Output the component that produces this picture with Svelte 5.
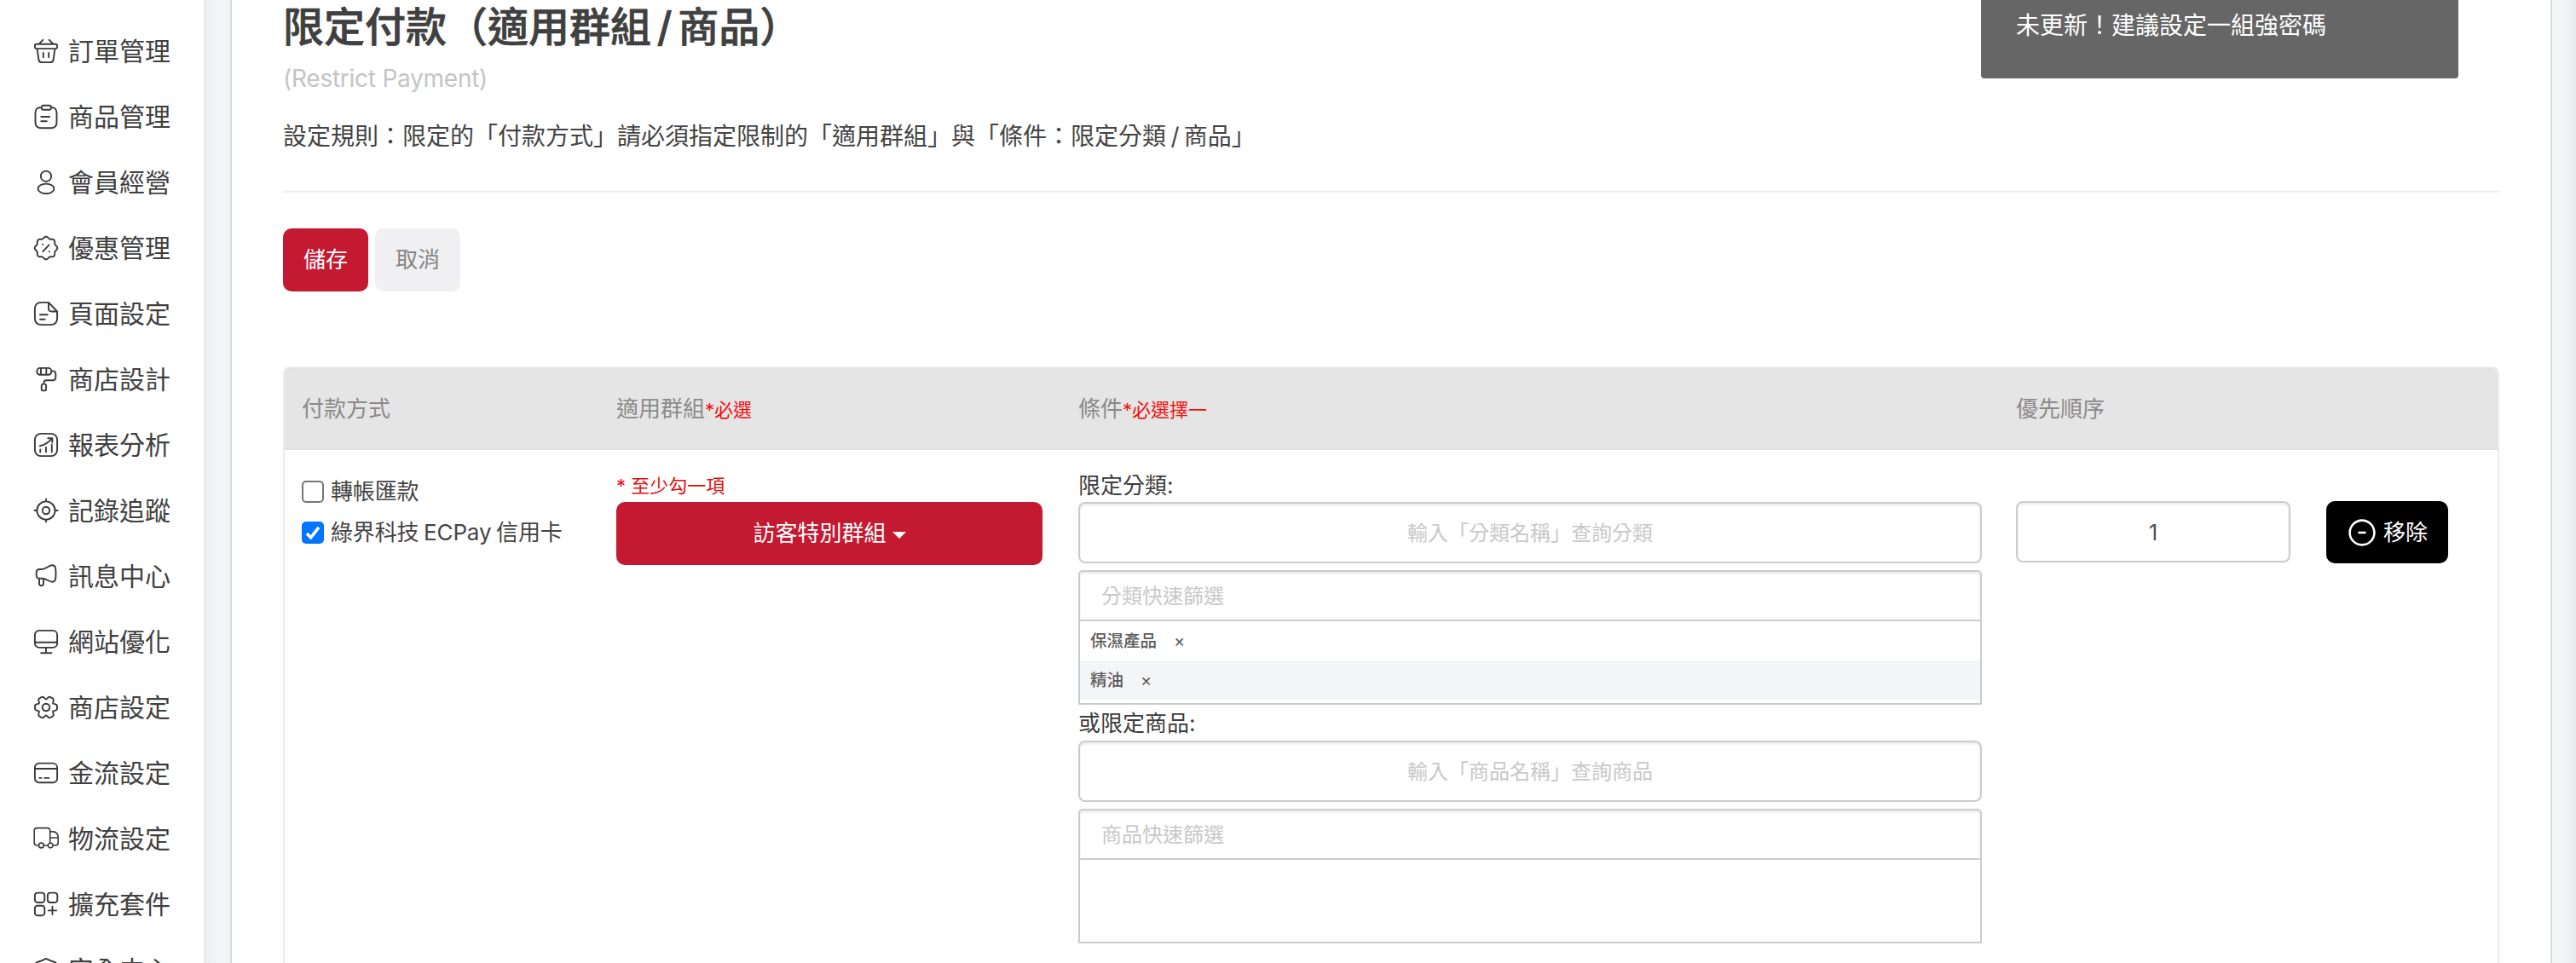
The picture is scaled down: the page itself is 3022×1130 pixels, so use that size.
<script>
  // Closed wavy outline around (14,14), used by the badge and gear icons.
  // `flat` widens the tips of the lobes.
  function lobes(count, base, amp, flat = 0) {
    let d = '';
    for (let i = 0; i < 120; i++) {
      const a = (i / 120) * Math.PI * 2;
      const r = base + amp * Math.cos(count * a) - flat * Math.cos(2 * count * a);
      d += (i ? 'L' : 'M') + (14 + r * Math.cos(a)).toFixed(2) + ' ' + (14 + r * Math.sin(a)).toFixed(2);
    }
    return d + 'Z';
  }

  const rr = (x, y, w, h, r) =>
    `M${x + r} ${y}h${w - 2 * r}a${r} ${r} 0 0 1 ${r} ${r}v${h - 2 * r}a${r} ${r} 0 0 1 ${-r} ${r}h${-(w - 2 * r)}a${r} ${r} 0 0 1 ${-r} ${-r}v${-(h - 2 * r)}a${r} ${r} 0 0 1 ${r} ${-r}Z`;
  const circle = (x, y, rx, ry = rx) =>
    `M${x - rx} ${y}a${rx} ${ry} 0 1 0 ${2 * rx} 0a${rx} ${ry} 0 1 0 ${-2 * rx} 0Z`;

  const menu = [
    { label: '訂單管理', d: rr(0.9, 5.7, 26.2, 5.4, 1.8) + 'M3.6 11.4L5.4 24Q5.9 27.1 8.8 27.1H19.2Q22.1 27.1 22.6 24L24.4 11.4M10.3 .8L5.7 5.6M17.7 .8L22.3 5.6M10.8 16V21.2M17.2 16V21.2' },
    { label: '商品管理', d: 'M8.8 3H8.3Q1.5 3 1.5 9.8V20.5Q1.5 27.2 8.3 27.2H19.7Q26.5 27.2 26.5 20.5V9.8Q26.5 3 19.7 3' + rr(8.8, 0.7, 11, 5, 1.8) + 'M8.3 14H18.2M8.3 19.3H14.8' },
    { label: '會員經營', d: circle(14, 6.8, 6.2) + circle(14, 21.4, 9.4, 5.8) },
    { label: '優惠管理', d: lobes(8, 12.3, 1) + 'M10.3 18.2L17.6 10.4M10 9.8h.2M17.7 18.3h.2' },
    { label: '頁面設定', d: 'M17 .9H8.5Q.9 .9 .9 8.5V19.5Q.9 27.1 8.5 27.1H19.5Q27.1 27.1 27.1 19.5V11.5ZM17 .9V8Q17 11.5 20.5 11.5H27.1M7 15.2H15.7M7 20.7H12.7' },
    { label: '商店設計', d: rr(3.4, 0.9, 16.8, 7.8, 3.4) + 'M8 1V8.6M14.3 1V8.6M20.2 4.4H22Q25.3 4.4 25.3 8V12Q25.3 15.2 22 15.2H14.5Q11.4 15.2 11.4 18.5V19.6' + rr(8.7, 19.6, 5.4, 7.8, 2) },
    { label: '報表分析', d: rr(0.9, 0.9, 26.2, 26.2, 7) + 'M7.2 19.5V22.5M14 17V22.5M20.8 13.5V22.5M6.8 15.2Q15 13.6 21.3 6.4M16.3 6.2H21.4V11' },
    { label: '記錄追蹤', d: circle(14, 14, 10.6) + circle(14, 14, 4.2) + 'M14 .4V3.4M14 24.6V27.6M.4 14H3.4M24.6 14H27.6' },
    { label: '訊息中心', d: 'M6.5 6H9C14 6 17 1.3 21.3 1.3C25 1.3 25.5 4 25.5 11C25.5 18 25 20.7 21.3 20.7C17 20.7 15 16.8 9 16.8H6.5Q2.7 16.8 2.7 13V9.8Q2.7 6 6.5 6ZM6 17V22.7a2.5 2.5 0 0 0 5 0V17.3' },
    { label: '網站優化', d: rr(0.9, 0.9, 26.2, 20, 5) + 'M1 14.7H27M14 21V27M8.2 27.2H20.4' },
    { label: '商店設定', d: lobes(6, 11.8, 1.8, 0.6) + circle(14, 14, 4.3) },
    { label: '金流設定', d: rr(0.9, 2.6, 26.2, 22.6, 5) + 'M1 9H27M6.3 19.9H8.6M12.2 19.9H17.4' },
    { label: '物流設定', thin: true, d: 'M5.3 22H3.4Q.2 22 .2 18.8V4.6Q.2 1.6 3.4 1.6H15.6Q18.7 1.6 18.7 4.6V19M18.7 5.9H22Q28.2 6.2 28.2 13V18.8Q28.2 22 25 22H22.2M18.7 13H28M11.4 22H16.2' + circle(8.4, 22, 2.9) + circle(19.2, 22, 2.9) },
    { label: '擴充套件', d: rr(0.9, 0.6, 11.4, 11.4, 3) + rr(15.9, 0.6, 11.4, 11.4, 3) + rr(0.9, 15.8, 11.4, 11.4, 3) + 'M21.5 16.8V26M16.9 21.4H26.1' },
    { label: '安全中心', d: 'M14 .9Q9 3.6 3.7 5Q1.9 5.5 1.9 7.5C1.9 17 5 24 14 27.1C23 24 26.1 17 26.1 7.5Q26.1 5.5 24.3 5Q19 3.6 14 .9Z' }
  ];

  const groups = [
    { title: '限定分類:', search: '輸入「分類名稱」查詢分類', filter: '分類快速篩選', items: ['保濕產品', '精油'] },
    { title: '或限定商品:', search: '輸入「商品名稱」查詢商品', filter: '商品快速篩選', items: [] }
  ];
</script>

<div class="app">
  <nav class="side">
    {#each menu as m}
      <a class="item">
        <svg class="ico" class:thin={m.thin} viewBox="0 0 28 28"><path d={m.d} /></svg>
        <span>{m.label}</span>
      </a>
    {/each}
  </nav>
  <div class="gutter left"></div>
  <main>
    <h1>限定付款（適用群組 / 商品）</h1>
    <p class="sub">(Restrict Payment)</p>
    <p class="desc">設定規則：限定的「付款方式」請必須指定限制的「適用群組」與「條件：限定分類 / 商品」</p>
    <div class="actions">
      <button class="btn red">儲存</button>
      <button class="btn gray">取消</button>
    </div>
    <section class="table">
      <div class="row head">
        <div>付款方式</div>
        <div>適用群組<small>*必選</small></div>
        <div>條件<small>*必選擇一</small></div>
        <div>優先順序</div>
      </div>
      <div class="row body">
        <div class="pay">
          <label><i class="check"></i>轉帳匯款</label>
          <label>
            <i class="check on"><svg viewBox="0 0 26 26"><path d="M6 14L10.6 18.8L20 6.8" /></svg></i>綠界科技 ECPay 信用卡
          </label>
        </div>
        <div class="group">
          <p class="warn">* 至少勾一項</p>
          <button class="btn red wide">訪客特別群組<i class="caret"></i></button>
        </div>
        <div class="cond">
          {#each groups as g}
            <p class="ctitle">{g.title}</p>
            <div class="search">{g.search}</div>
            <div class="filter">{g.filter}</div>
            <div class="list">
              {#each g.items as it}
                <div class="li"><span>{it}</span><b>×</b></div>
              {/each}
            </div>
          {/each}
        </div>
        <div class="prio"><div class="num">1</div></div>
        <div class="prio">
          <button class="btn remove">
            <svg viewBox="0 0 32 32"><circle cx="16" cy="16" r="14.4" /><path d="M11.5 16H20.5" /></svg>移除
          </button>
        </div>
      </div>
    </section>
    <aside class="toast">未更新！建議設定一組強密碼</aside>
  </main>
  <div class="gutter right"></div>
</div>

<style>
  :global(body) { background: #fff; overflow: hidden; }
  .app {
    display: grid;
    grid-template-columns: 239px 31px 2724px 28px;
    width: 3022px; height: 1130px; overflow: hidden;
    font-family: Inter, "Noto Sans CJK TC", sans-serif;
    font-size: 26px; color: #444;
  }
  .app * { box-sizing: border-box; }
  p, h1 { margin: 0; white-space: nowrap; }
  .side { padding-top: 21px; height: 1130px; overflow: hidden; }
  .item { display: flex; align-items: center; height: 77px; padding-left: 40px; gap: 12px; font-size: 30px; line-height: 44px; color: #404040; }
  .item span { white-space: nowrap; }
  .ico { width: 28px; height: 28px; overflow: visible; flex: none; }
  .ico path { fill: none; stroke: #3a3a3a; stroke-width: 1.9; stroke-linecap: round; stroke-linejoin: round; }
  .ico.thin path { stroke-width: 1.6; }
  .gutter.left { background: linear-gradient(90deg, #e9eaeb, #f1f2f3 35%, #f4f5f7 75%); }
  .gutter.right { background: linear-gradient(90deg, #f4f5f7 20%, #f0f1f2 65%, #e9eaeb); }
  main {
    position: relative; height: 1130px; overflow: hidden;
    background: #fff; border: solid #d8dbde; border-width: 0 2px;
    padding: 0 60px;
  }
  h1 { font-size: 48px; line-height: 72px; height: 72px; margin-top: -4px; font-weight: 500; color: #404040; word-spacing: -6px; -webkit-text-stroke: .7px #404040; }
  .sub { font-size: 28px; line-height: 40px; margin-top: 4px; color: #c4c4c4; letter-spacing: -.25px; }
  .desc { font-size: 28px; line-height: 40px; margin-top: 28px; height: 86px; border-bottom: 2px solid #eee; word-spacing: -2.5px; }
  .actions { display: flex; gap: 8px; margin-top: 42px; }
  .btn {
    display: flex; align-items: center; justify-content: center;
    width: 100px; height: 74px; border: 0; border-radius: 10px; padding: 0;
    font: inherit; line-height: 38px; white-space: nowrap;
  }
  .red { background: #c41a31; color: #fff; }
  .gray { background: #f0f0f2; color: #858585; }
  .table { margin-top: 88px; width: 2600px; height: 760px; border: 2px solid #ececec; border-radius: 8px; }
  .row { display: grid; grid-template-columns: 369px 542px 1100px 364px 1fr; padding-left: 20px; }
  .head { height: 96px; background: #e5e5e5; border: solid #dee2e6; border-width: 1px 0; border-radius: 6px 6px 0 0; line-height: 94px; color: #8a8a8a; }
  .head small { font-size: 22px; color: #f01010; }
  .pay { display: flex; flex-direction: column; gap: 10px; padding-top: 30px; }
  .pay label { display: flex; align-items: center; gap: 8px; height: 38px; line-height: 38px; white-space: nowrap; word-spacing: -1.5px; letter-spacing: -.15px; }
  .check { width: 26px; height: 26px; border: 2px solid #767676; border-radius: 5px; background: #fff; flex: none; }
  .check.on { border: 0; background: #0075ff; }
  .check svg { display: block; width: 26px; height: 26px; }
  .check path { fill: none; stroke: #fff; stroke-width: 3.6; }
  .group { padding-top: 25px; }
  .warn { font-size: 22px; line-height: 34px; height: 36px; color: #e60c0c; }
  .wide { width: 500px; }
  .caret { margin-left: 7px; border: 8px solid transparent; border-top-color: #fff; border-bottom: 0; margin-top: 3px; }
  .cond { width: 1060px; padding-top: 20px; }
  .ctitle { line-height: 43px; height: 42px; color: #3c3c3c; }
  .ctitle:first-child { height: 41px; }
  .search, .num {
    height: 72px; border: 2px solid #ccc; border-radius: 8px; line-height: 70px; text-align: center;
    font-size: 24px; color: #c8c8c8; box-shadow: inset 0 2px 3px rgba(0, 0, 0, .09);
  }
  .filter {
    margin-top: 8px; height: 60px; border: 2px solid #ccc; border-radius: 5px 5px 0 0; padding-left: 25px;
    line-height: 58px; font-size: 24px; color: #c8c8c8; box-shadow: inset 0 2px 3px rgba(0, 0, 0, .09);
  }
  .list { height: 98px; border: 2px solid #ccc; border-top: 0; }
  .li { display: flex; align-items: center; height: 46px; padding-left: 12px; gap: 20px; font-size: 19.5px; font-weight: 500; line-height: 30px; color: #5a5a5a; }
  .li:nth-child(even) { background: #f4f5f7; }
  .li b { font-weight: 400; font-size: 20px; }
  .prio { padding-top: 60px; }
  .num { width: 322px; font-size: 26px; color: #555; }
  .remove { width: 143px; height: 73px; background: #000; color: #fff; gap: 9px; padding-left: 2px; }
  .remove svg { width: 32px; height: 32px; }
  .remove circle, .remove path { fill: none; stroke: #fff; stroke-width: 2.6; }
  .toast {
    position: absolute; top: 0; left: 2052px; width: 560px; height: 92px; padding-left: 41px;
    background: #666; color: #fff; border-radius: 0 0 4px 4px; font-size: 28px; line-height: 60px; white-space: nowrap;
  }
</style>
